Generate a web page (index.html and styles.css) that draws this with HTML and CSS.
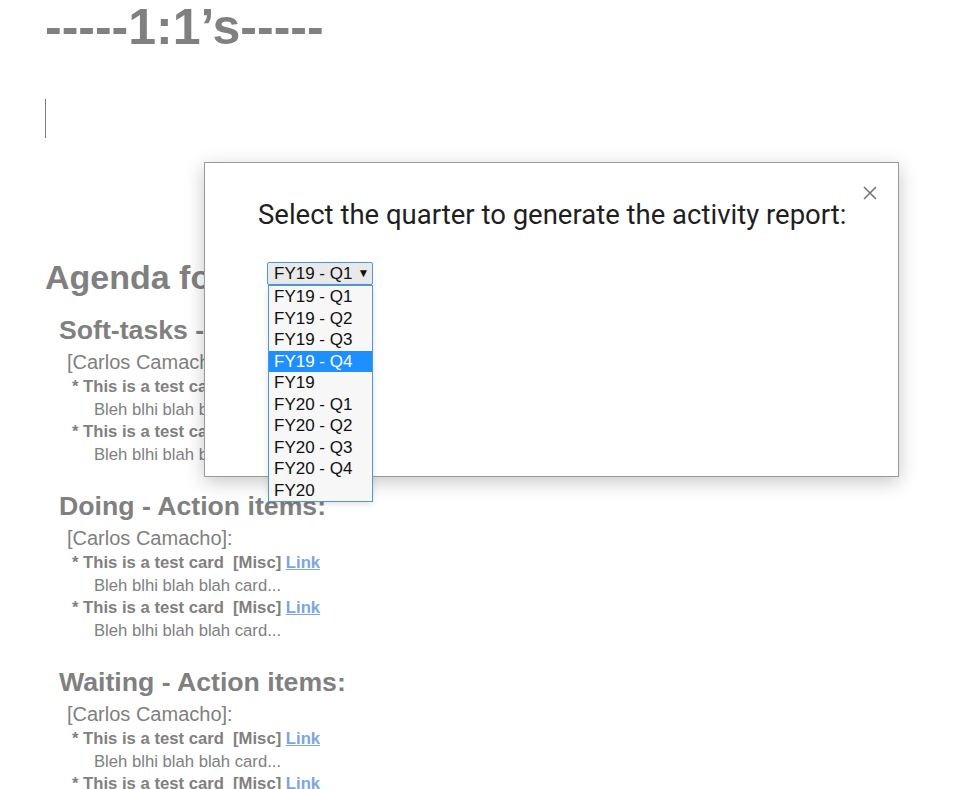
FILE: index.html
```html
<!DOCTYPE html>
<html>
<head>
<meta charset="utf-8">
<link rel="stylesheet" href="styles.css">
</head>
<body>
<div class="doc">
  <h1 class="head">-----1:1’s-----</h1>
  <div class="caret"></div>
  <h2 class="agenda">Agenda for this week:</h2>

  <section class="sec">
    <h3 class="sec-title">Soft-tasks - Action items:</h3>
    <div class="person">[Carlos Camacho]:</div>
    <div class="card">* This is a test card &nbsp;[Misc] <a href="#" class="link">Link</a></div>
    <div class="desc">Bleh blhi blah blah card...</div>
    <div class="card">* This is a test card &nbsp;[Misc] <a href="#" class="link">Link</a></div>
    <div class="desc">Bleh blhi blah blah card...</div>
  </section>

  <section class="sec">
    <h3 class="sec-title">Doing - Action items:</h3>
    <div class="person">[Carlos Camacho]:</div>
    <div class="card">* This is a test card &nbsp;[Misc] <a href="#" class="link">Link</a></div>
    <div class="desc">Bleh blhi blah blah card...</div>
    <div class="card">* This is a test card &nbsp;[Misc] <a href="#" class="link">Link</a></div>
    <div class="desc">Bleh blhi blah blah card...</div>
  </section>

  <section class="sec">
    <h3 class="sec-title">Waiting - Action items:</h3>
    <div class="person">[Carlos Camacho]:</div>
    <div class="card">* This is a test card &nbsp;[Misc] <a href="#" class="link">Link</a></div>
    <div class="desc">Bleh blhi blah blah card...</div>
    <div class="card">* This is a test card &nbsp;[Misc] <a href="#" class="link">Link</a></div>
    <div class="desc">Bleh blhi blah blah card...</div>
  </section>
</div>

<div class="modal">
  <button class="close" aria-label="Close">
    <svg width="16" height="16" viewBox="0 0 16 16"><path d="M2 2 L14 14 M14 2 L2 14" stroke="#757575" stroke-width="1.6" fill="none"/></svg>
  </button>
  <div class="modal-title">Select the quarter to generate the activity report:</div>
  <div class="select-wrap">
    <div class="select">FY19 - Q1<span class="arrow">▼</span></div>
    <ul class="options">
      <li>FY19 - Q1</li>
      <li>FY19 - Q2</li>
      <li>FY19 - Q3</li>
      <li class="hl">FY19 - Q4</li>
      <li>FY19</li>
      <li>FY20 - Q1</li>
      <li>FY20 - Q2</li>
      <li>FY20 - Q3</li>
      <li>FY20 - Q4</li>
      <li>FY20</li>
    </ul>
  </div>
</div>
</body>
</html>
```

FILE: styles.css
```css
html, body {
  margin: 0;
  padding: 0;
  background: #fff;
  overflow: hidden;
}
body {
  font-family: "Liberation Sans", Arial, sans-serif;
  color: #808080;
  width: 953px;
  height: 789px;
  position: relative;
}
.doc {
  padding-left: 45px;
}
.head {
  margin: 2px 0 0;
  font-size: 50px;
  line-height: 50px;
  font-weight: bold;
}
.caret {
  margin-top: 47px;
  width: 1px;
  height: 39px;
  background: #7a7a7a;
}
.agenda {
  margin: 119px 0 0;
  font-size: 34px;
  line-height: 40px;
  font-weight: bold;
  white-space: nowrap;
}
.sec {
  margin-left: 14px;
  margin-top: 22px;
}
.sec:first-of-type {
  margin-top: 15px;
}
.sec-title {
  margin: 0;
  font-size: 26.67px;
  line-height: 36px;
  font-weight: bold;
}
.person {
  margin-left: 8px;
  font-size: 20px;
  line-height: 28px;
}
.card {
  margin-left: 13px;
  font-size: 16.67px;
  line-height: 22.5px;
  font-weight: bold;
}
.link {
  color: #7ca5e4;
  text-decoration: underline;
}
.desc {
  margin-left: 35px;
  font-size: 16.67px;
  line-height: 22.5px;
}

.modal {
  position: absolute;
  left: 204px;
  top: 162px;
  width: 695px;
  height: 315px;
  background: #fff;
  border: 1px solid #9a9a9a;
  box-shadow: 0 5px 18px rgba(0, 0, 0, 0.22);
  padding: 35px 0 0 53px;
  box-sizing: border-box;
}
.close {
  position: absolute;
  right: 20px;
  top: 22px;
  width: 16px;
  height: 16px;
  padding: 0;
  border: 0;
  background: none;
  display: block;
}
.close svg {
  display: block;
}
.modal-title {
  font-family: Roboto, "Liberation Sans", sans-serif;
  font-size: 27.5px;
  line-height: 33px;
  color: #1f1f1f;
  white-space: nowrap;
}
.select-wrap {
  position: relative;
  margin: 31px 0 0 9px;
  width: 106px;
}
.select {
  box-sizing: border-box;
  width: 106px;
  height: 23px;
  border: 1px solid #4e97db;
  border-radius: 2px;
  background: #e9e9e9;
  color: #111;
  font-size: 17px;
  line-height: 21px;
  padding-left: 6px;
  display: flex;
  align-items: center;
  gap: 5px;
}
.arrow {
  font-size: 12px;
  line-height: 21px;
  color: #111;
}
.options {
  position: absolute;
  left: 1px;
  top: 23px;
  width: 105px;
  box-sizing: border-box;
  margin: 0;
  padding: 0;
  list-style: none;
  background: #f7f7f7;
  border: 1px solid #4e97db;
  z-index: 5;
  box-shadow: 0 2px 6px rgba(0, 0, 0, 0.12);
}
.options li {
  height: 21.5px;
  line-height: 21.5px;
  font-size: 17px;
  color: #111;
  padding-left: 5px;
}
.options li.hl {
  background: #1e8fff;
  color: #fff;
}
```
